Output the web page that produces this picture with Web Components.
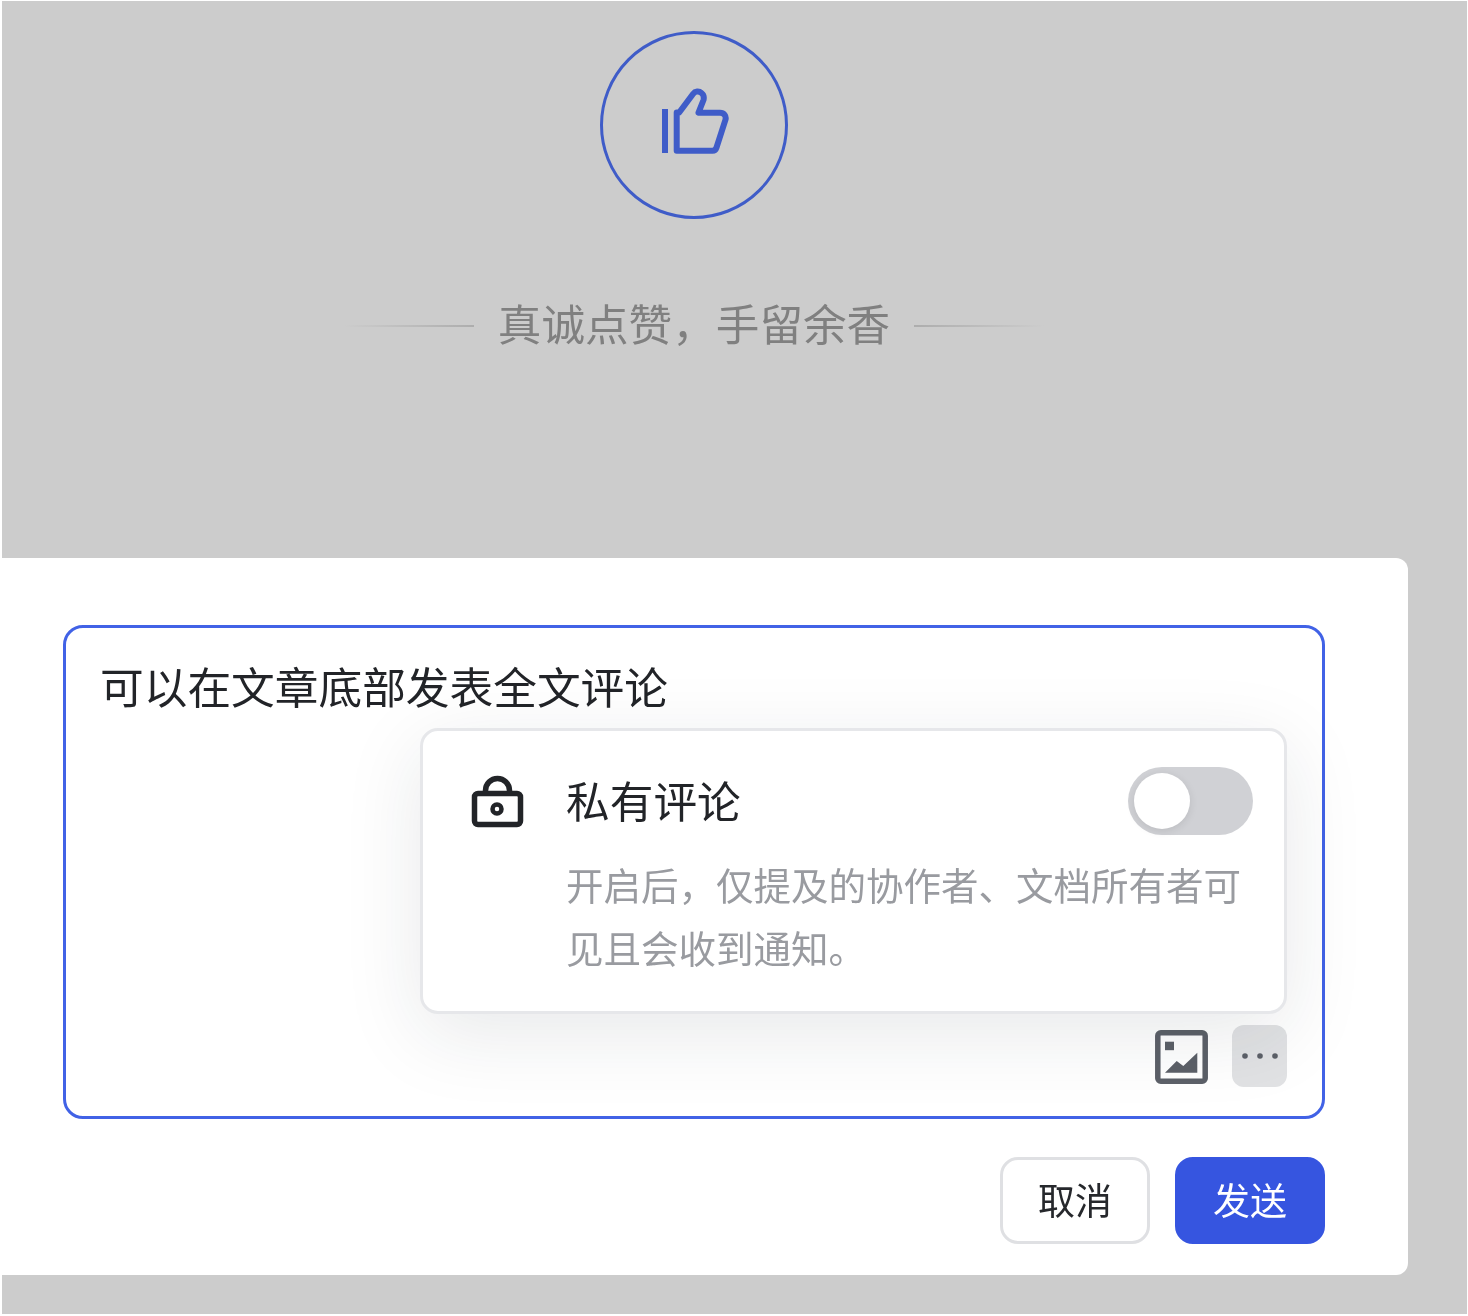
<!DOCTYPE html>
<html lang="zh">
<head>
<meta charset="utf-8">
<title>评论</title>
<style>
    html, body { margin: 0; background: #fff; }
    body { font-family: "Noto Sans CJK SC", "Liberation Sans", sans-serif; }
</style>
</head>
<body>
<doc-stage>
    <like-panel slot="top">真诚点赞，手留余香</like-panel>
    <comment-card slot="bottom">
        <comment-editor>可以在文章底部发表全文评论</comment-editor>
    </comment-card>
</doc-stage>

<script>
const FONT = '"Noto Sans CJK SC", "Liberation Sans", sans-serif';

class DocStage extends HTMLElement {
    constructor() {
        super();
        this.attachShadow({ mode: 'open' }).innerHTML = `
            <style>
                /* the reference is an upscaled capture, so everything is a little soft */
                :host { display: block; height: 1316px; box-sizing: border-box; padding: 1px 1px 2px 2px; font-family: ${FONT}; filter: blur(.6px); }
                .panel { height: 100%; background: #ccc; display: flex; flex-direction: column; justify-content: space-between; padding-bottom: 39px; box-sizing: border-box; }
            </style>
            <div class="panel">
                <slot name="top"></slot>
                <slot name="bottom"></slot>
            </div>`;
    }
}

class LikePanel extends HTMLElement {
    constructor() {
        super();
        this.attachShadow({ mode: 'open' }).innerHTML = `
            <style>
                :host { display: flex; flex-direction: column; align-items: center; width: 1384px; padding-top: 30px; }
                .round { width: 188px; height: 188px; box-sizing: border-box; border: 3px solid #3f5cc8; border-radius: 50%; display: flex; align-items: center; justify-content: center; }
                svg { display: block; }
                .caption { display: flex; align-items: center; gap: 24px; margin-top: 73px; color: #808080; font-size: 43.600px; line-height: 60px; }
                .caption span { margin-bottom: 8px; }
                .caption i { display: block; width: 130px; height: 2px; background: linear-gradient(90deg, rgba(170,170,170,0), #adadad); }
                .caption i:last-child { transform: scaleX(-1); }
            </style>
            <div class="round">
                <svg width="70" height="80" viewBox="0 0 70 80" fill="none" stroke="#3f5cc8" stroke-linejoin="round">
                    <path d="M6 24v44" stroke-width="6"/>
                    <path d="M17.700 65.700V27.500h2.500L34 9c2.200-3 6-3.200 8.500-1 2.500 2 2.600 4.500 2 7L39.500 27.700H61c4 0 6.500 3.300 5.500 7L57.500 62.500c-.6 2-1.500 3.200-4 3.200z" stroke-width="6"/>
                </svg>
            </div>
            <div class="caption"><i></i><span><slot></slot></span><i></i></div>`;
    }
}

class CommentCard extends HTMLElement {
    constructor() {
        super();
        this.attachShadow({ mode: 'open' }).innerHTML = `
            <style>
                :host { display: block; width: 1406px; box-sizing: border-box; background: #fff; border-radius: 0 12px 12px 0; padding: 67px 83px 31px 61px; }
                .actions { display: flex; justify-content: flex-end; gap: 25px; margin-top: 38px; }
            </style>
            <slot></slot>
            <div class="actions">
                <action-button>取消</action-button>
                <action-button primary>发送</action-button>
            </div>`;
    }
}

class ActionButton extends HTMLElement {
    constructor() {
        super();
        this.attachShadow({ mode: 'open' }).innerHTML = `
            <style>
                :host { display: flex; align-items: center; justify-content: center; width: 150px; height: 87px; box-sizing: border-box; padding-bottom: 4px; border: 3px solid #dfe0e3; border-radius: 18px; background: #fff; color: #26282c; font-size: 37px; }
                :host([primary]) { border-color: #3655e0; background: #3655e0; color: #fff; }
            </style>
            <slot></slot>`;
    }
}

class CommentEditor extends HTMLElement {
    constructor() {
        super();
        this.attachShadow({ mode: 'open' }).innerHTML = `
            <style>
                :host { display: flex; flex-direction: column; position: relative; height: 494px; box-sizing: border-box; border: 3px solid #4162e6; border-radius: 20px; padding: 27px 35px 29px 34px; color: #222428; font-size: 43.700px; line-height: 60px; }
                .text { flex: 1; }
                private-popover { position: absolute; left: 354px; top: 100px; }
                .tools { display: flex; justify-content: flex-end; align-items: center; gap: 24px; }
                .img { display: block; margin-top: 1px; }
                .more { width: 55px; height: 62px; border-radius: 12px; background: #e1e2e4; display: flex; align-items: center; justify-content: center; }
            </style>
            <div class="text"><slot></slot></div>
            <private-popover></private-popover>
            <div class="tools">
                <svg class="img" width="53" height="54" viewBox="0 0 53 54">
                    <rect x="2.800" y="2.800" width="47.400" height="48.400" rx="3" fill="#fff" stroke="#5c6068" stroke-width="5.500"/>
                    <rect x="10" y="11.700" width="9" height="8.500" fill="#5c6068"/>
                    <path d="M10 42.700L21.700 31l6.600 5 14-13.300v20z" fill="#5c6068"/>
                </svg>
                <div class="more">
                    <svg width="36" height="6" viewBox="0 0 36 6" fill="#5c6068">
                        <circle cx="3" cy="3" r="2.800"/><circle cx="18" cy="3" r="2.800"/><circle cx="33" cy="3" r="2.800"/>
                    </svg>
                </div>
            </div>`;
    }
}

class PrivatePopover extends HTMLElement {
    constructor() {
        super();
        this.attachShadow({ mode: 'open' }).innerHTML = `
            <style>
                :host { display: grid; grid-template-columns: 54px 1fr; column-gap: 42px; width: 867px; height: 286px; box-sizing: border-box; padding: 44px 31px 0 47px; background: #fff; border: 3px solid #e6e7ea; border-radius: 18px; box-shadow: 0 20px 80px rgba(30, 35, 50, .1); }
                .lock { display: block; }
                .body { min-width: 0; }
                .head { display: flex; justify-content: space-between; align-items: center; margin-top: -8px; height: 68px; color: #222428; font-size: 43.700px; line-height: 60px; }
                .head span { margin-bottom: 4px; }
                .desc { margin: 17px 0 0; color: #999ba0; font-size: 37.500px; line-height: 63px; width: 680px; }
            </style>
            <svg class="lock" width="54" height="54" viewBox="0 0 54 54" fill="none" stroke="#222428" stroke-width="5.500">
                <rect x="4.500" y="18.500" width="46" height="31" rx="3.500"/>
                <path d="M15.500 18.500v-3a12 12 0 0 1 24 0v3"/>
                <circle cx="27" cy="34" r="4.500" stroke-width="4.500"/>
            </svg>
            <div class="body">
                <div class="head"><span>私有评论</span><toggle-switch></toggle-switch></div>
                <p class="desc">开启后，仅提及的协作者、文档所有者可见且会收到通知。</p>
            </div>`;
    }
}

class ToggleSwitch extends HTMLElement {
    constructor() {
        super();
        this.attachShadow({ mode: 'open' }).innerHTML = `
            <style>
                :host { display: block; width: 125px; height: 68px; box-sizing: border-box; padding: 6px; border-radius: 34px; background: #d0d1d5; }
                i { display: block; width: 56px; height: 56px; border-radius: 50%; background: #fff; box-shadow: 0 2px 8px rgba(0, 0, 0, .1); }
            </style>
            <i></i>`;
    }
}

customElements.define('doc-stage', DocStage);
customElements.define('like-panel', LikePanel);
customElements.define('comment-card', CommentCard);
customElements.define('action-button', ActionButton);
customElements.define('comment-editor', CommentEditor);
customElements.define('private-popover', PrivatePopover);
customElements.define('toggle-switch', ToggleSwitch);
</script>
</body>
</html>
